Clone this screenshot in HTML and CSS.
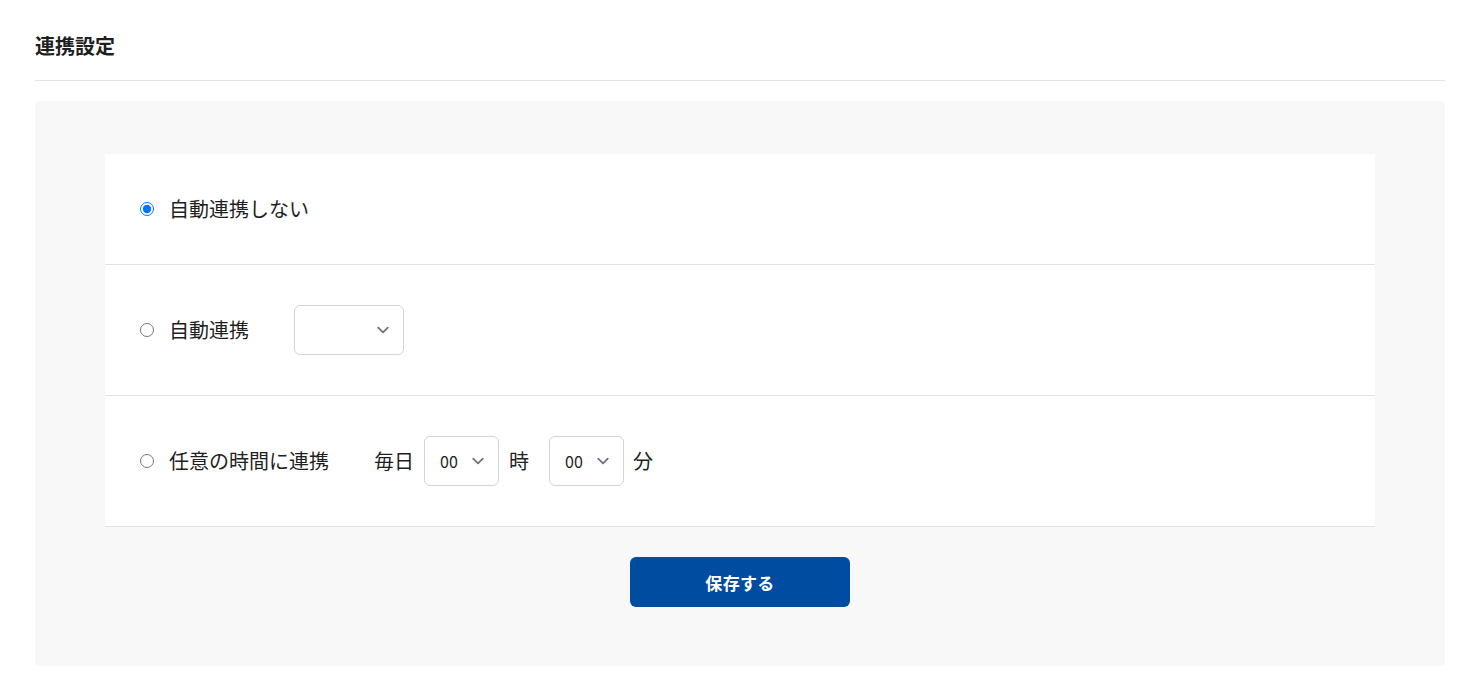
FILE: index.html
```html
<!DOCTYPE html>
<html lang="ja">
<head>
<meta charset="utf-8">
<title>連携設定</title>
<link rel="stylesheet" href="styles.css">
</head>
<body>
<div class="page">
  <h1 class="title">連携設定</h1>
  <div class="panel">
    <div class="options">
      <label class="row">
        <input type="radio" name="sync" class="radio" checked>
        <span class="label-text">自動連携しない</span>
      </label>
      <label class="row">
        <input type="radio" name="sync" class="radio">
        <span class="label-text wide">自動連携</span>
        <select class="select select-interval"><option></option></select>
      </label>
      <label class="row">
        <input type="radio" name="sync" class="radio">
        <span class="label-text wide">任意の時間に連携</span>
        <span class="unit">毎日</span>
        <select class="select select-time"><option>00</option></select>
        <span class="unit after">時</span>
        <select class="select select-time"><option>00</option></select>
        <span class="unit last">分</span>
      </label>
    </div>
    <div class="actions">
      <button class="save" type="button">保存する</button>
    </div>
  </div>
</div>
</body>
</html>
```

FILE: styles.css
```css
* { box-sizing: border-box; }
html, body { margin: 0; background: #fff; }
body {
  font-family: "Noto Sans CJK JP", "Noto Sans", sans-serif;
  color: #1f1f1f;
}
.page {
  padding: 0 37px 0 35px;
}
.title {
  margin: 0;
  padding: 32px 0 21px;
  font-size: 20px;
  line-height: 27px;
  font-weight: 700;
  border-bottom: 1px solid #e2e2e2;
}
.panel {
  margin-top: 20px;
  background: #f8f8f8;
  border-radius: 5px;
  padding: 53px 70px 59px;
}
.options {
  background: #fff;
}
.row {
  display: flex;
  align-items: center;
  padding: 40px 35px;
  min-height: 110px;
  border-bottom: 1px solid #e2e2e2;
  font-size: 20px;
  line-height: 30px;
}
.radio {
  margin: 0 15px 0 0;
  width: 14px;
  height: 14px;
  flex: none;
}
.label-text.wide {
  margin-right: 45px;
}
.select {
  appearance: none;
  -webkit-appearance: none;
  height: 50px;
  border: 1px solid #d4d4d4;
  border-radius: 6px;
  background-color: #fff;
  background-image: url("data:image/svg+xml,%3csvg xmlns='http://www.w3.org/2000/svg' fill='none' viewBox='0 0 20 20'%3e%3cpath stroke='%236b7280' stroke-linecap='round' stroke-linejoin='round' stroke-width='1.5' d='M6 8l4 4 4-4'/%3e%3c/svg%3e");
  background-repeat: no-repeat;
  background-position: right 8px center;
  background-size: 24px 24px;
  font-family: "Noto Sans CJK JP", "Noto Sans", sans-serif;
  font-size: 16px;
  color: #1f1f1f;
  padding: 0 36px 0 15px;
}
.select-interval { width: 110px; }
.select-time { width: 75px; }
.unit { margin-right: 10px; }
.unit.after { margin-left: 10px; margin-right: 20px; }
.unit.last { margin-left: 9px; margin-right: 0; }
.actions {
  display: flex;
  justify-content: center;
  margin-top: 30px;
}
.save {
  width: 220px;
  height: 50px;
  border: none;
  border-radius: 6px;
  background: #004ca0;
  color: #fff;
  font-family: "Noto Sans CJK JP", "Noto Sans", sans-serif;
  font-size: 17px;
  font-weight: 700;
  letter-spacing: 0.02em;
}
```
